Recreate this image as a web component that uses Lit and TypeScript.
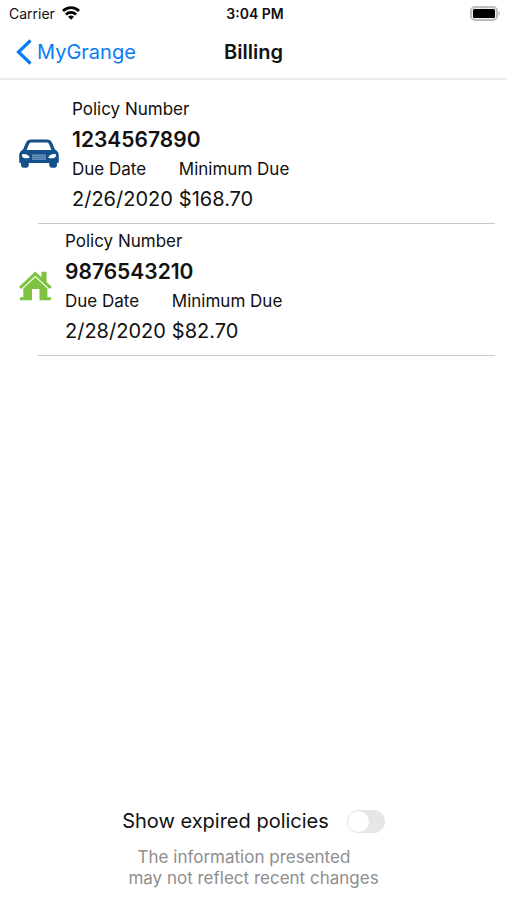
import { LitElement, html, css, svg } from "lit";
import { customElement, property, state } from "lit/decorators.js";

interface Policy {
  kind: "auto" | "home";
  number: string;
  dueDate: string;
  minimumDue: string;
}

const POLICIES: Policy[] = [
  { kind: "auto", number: "1234567890", dueDate: "2/26/2020", minimumDue: "$168.70" },
  { kind: "home", number: "9876543210", dueDate: "2/28/2020", minimumDue: "$82.70" },
];

const carIcon = html`<svg width="40" height="34" viewBox="0 0 40 34" aria-hidden="true">
  ${svg`
    <path fill="#14508a" fill-rule="evenodd" d="M12.500 .5H27.500C30.600 .5 32.200 1.600 33.200 4L36 10.600C38.600 12 39.800 14 39.800 16.800V22.500C39.800 23.500 39.200 24 38.300 24H38V26C38 28 36.800 28.800 34.200 28.800S30.200 28 30.200 26V24H9.800V26C9.800 28 8.400 28.800 5.800 28.800S2 28 2 26V24H1.700C.8 24 .2 23.500 .2 22.500V16.800C.2 14 1.400 12 4 10.600L6.800 4C7.800 1.600 9.400 .5 12.500 .5ZM13 3.400C11.200 3.400 10.400 3.900 9.900 5.200L7.600 11H32.400L30.100 5.200C29.600 3.900 28.800 3.400 27 3.400Z"/>
    <path fill="#fff" d="M3.200 15.200C6.500 14.800 9.200 15.800 10.800 18.400C8.600 19.700 5.300 19.500 3.800 18.300C3 17.500 2.900 16.200 3.200 15.200ZM36.800 15.200C33.500 14.800 30.800 15.800 29.200 18.400C31.400 19.700 34.700 19.500 36.200 18.300C37 17.500 37.100 16.200 36.800 15.200Z"/>
    <path stroke="#7fa3c4" stroke-width="1.200" d="M13 16.200H27M13 18.200H27M13 20.200H27"/>
  `}
</svg>`;

const homeIcon = html`<svg width="33" height="34" viewBox="0 0 33 34" aria-hidden="true">
  ${svg`
    <path fill="#7fc241" d="M16.300 .5L22.500 6.200V.8H27.500V10.900L32.800 15.800L30.600 18L16.300 4.800L2.200 18L0 15.800Z"/>
    <path fill="#7fc241" d="M16.300 6.200L28.400 17.400V26.200H32V29.200H20.500V18H13V29.200H1V26.200H4.300V17.400Z"/>
  `}
</svg>`;

const wifiIcon = html`<svg width="18" height="14" viewBox="0 0 18 14" aria-hidden="true">
  ${svg`
    <g fill="none" stroke="#000" stroke-width="2.700">
      <path d="M1 5C5.500 .6 12.500 .6 17 5"/>
      <path d="M3.900 8.500C6.800 5.700 11.200 5.700 14.100 8.500"/>
    </g>
    <path d="M6 10.700C7.700 9.100 10.300 9.100 12 10.700L9 13.700Z"/>
  `}
</svg>`;

const batteryIcon = html`<svg width="31" height="15" viewBox="0 0 31 15" role="img" aria-label="Battery full">
  ${svg`
    <rect x="1" y="1" width="26" height="13" rx="4" fill="#eee" stroke="#bdbdbd" stroke-width="2"/>
    <rect x="3" y="3" width="22" height="9" rx="1.500" fill="#000"/>
    <path fill="#bdbdbd" d="M28.500 5.200C30.500 5.800 30.500 9.200 28.500 9.800Z"/>
  `}
</svg>`;

@customElement("status-bar")
export class StatusBar extends LitElement {
  static styles = css`
    :host {
      display: grid;
      grid-template-columns: 1fr auto 1fr;
      align-items: center;
      height: 26px;
      padding: 0 6px 0 9px;
      font-size: 14px;
    }
    .carrier {
      display: flex;
      align-items: center;
      gap: 7px;
    }
    .time {
      font-weight: 600;
    }
    .battery {
      display: flex;
      justify-content: flex-end;
    }
    svg {
      display: block;
    }
  `;

  render() {
    return html`
      <div class="carrier"><span>Carrier</span>${wifiIcon}</div>
      <div class="time">3:04 PM</div>
      <div class="battery">${batteryIcon}</div>
    `;
  }
}

@customElement("nav-bar")
export class NavBar extends LitElement {
  static styles = css`
    :host {
      display: grid;
      grid-template-columns: 1fr auto 1fr;
      align-items: center;
      height: 52px;
      padding: 0 16px;
      border-bottom: 2px solid #ececec;
    }
    .back {
      display: flex;
      align-items: center;
      gap: 5px;
      color: #0a7cf5;
      font-size: 20px;
      text-decoration: none;
    }
    h1 {
      margin: 0;
      font-size: 20px;
      font-weight: 600;
    }
  `;

  render() {
    return html`
      <a class="back" href="#mygrange">
        <svg width="16" height="26" viewBox="0 0 16 26" aria-hidden="true">
          <path d="M14.500 1.500L2.500 13L14.500 24.500" fill="none" stroke="currentColor" stroke-width="3.200" />
        </svg>
        <span>MyGrange</span>
      </a>
      <h1>Billing</h1>
    `;
  }
}

@customElement("policy-row")
export class PolicyRow extends LitElement {
  @property({ attribute: false }) policy!: Policy;

  static styles = css`
    :host {
      display: block;
    }
    .row {
      display: flex;
      align-items: center;
      padding: 4px 0 7px 19px;
    }
    .icon {
      display: flex;
      flex: none;
      margin-right: 13px;
    }
    dl {
      display: grid;
      grid-template-columns: auto auto;
      justify-content: start;
      column-gap: 6px;
      margin: 0;
    }
    .number {
      grid-column: 1 / -1;
    }
    dt {
      font-size: 17px;
      line-height: 27px;
    }
    dd {
      margin: 0;
      font-size: 20px;
      line-height: 33px;
    }
    .number dd {
      font-size: 21px;
      font-weight: 600;
    }
    .rule {
      height: 1px;
      margin: 0 12px 0 38px;
      background: #c8c8c8;
    }
  `;

  render() {
    const { kind, number, dueDate, minimumDue } = this.policy;
    return html`
      <div class="row">
        <div class="icon">${kind === "auto" ? carIcon : homeIcon}</div>
        <dl>
          <div class="number"><dt>Policy Number</dt><dd>${number}</dd></div>
          <div><dt>Due Date</dt><dd>${dueDate}</dd></div>
          <div><dt>Minimum Due</dt><dd>${minimumDue}</dd></div>
        </dl>
      </div>
      <div class="rule"></div>
    `;
  }
}

@customElement("app-root")
export class AppRoot extends LitElement {
  @state() private showExpired = false;

  static styles = css`
    :host {
      display: flex;
      flex-direction: column;
      min-height: 100vh;
      background: #fff;
      color: #111;
      font-family: Inter, "Liberation Sans", sans-serif;
    }
    main {
      flex: 1;
      padding-top: 12px;
    }
    footer {
      display: flex;
      flex-direction: column;
      align-items: center;
      gap: 12px;
      padding-bottom: 11px;
    }
    .toggle {
      display: flex;
      align-items: center;
      gap: 18px;
      font-size: 20px;
      line-height: 28px;
    }
    input {
      appearance: none;
      display: flex;
      align-items: center;
      width: 38px;
      height: 23px;
      margin: 0;
      border-radius: 12px;
      background: #e6e6e7;
    }
    input::before {
      content: "";
      width: 21px;
      height: 21px;
      margin: 0 1px;
      border-radius: 50%;
      background: #fff;
    }
    input:checked {
      justify-content: flex-end;
      background: #34c759;
    }
    .note {
      margin: 0;
      color: #8e8e8e;
      font-size: 17px;
      line-height: 21px;
      text-align: center;
      white-space: pre;
    }
  `;

  private onToggle(event: Event) {
    this.showExpired = (event.target as HTMLInputElement).checked;
  }

  render() {
    return html`
      <status-bar></status-bar>
      <nav-bar></nav-bar>
      <main>${POLICIES.map((policy) => html`<policy-row .policy=${policy}></policy-row>`)}</main>
      <footer>
        <label class="toggle">
          <span>Show expired policies</span>
          <input type="checkbox" role="switch" .checked=${this.showExpired} @change=${this.onToggle} />
        </label>
        <p class="note">${"The information presented    \nmay not reflect recent changes"}</p>
      </footer>
    `;
  }
}
